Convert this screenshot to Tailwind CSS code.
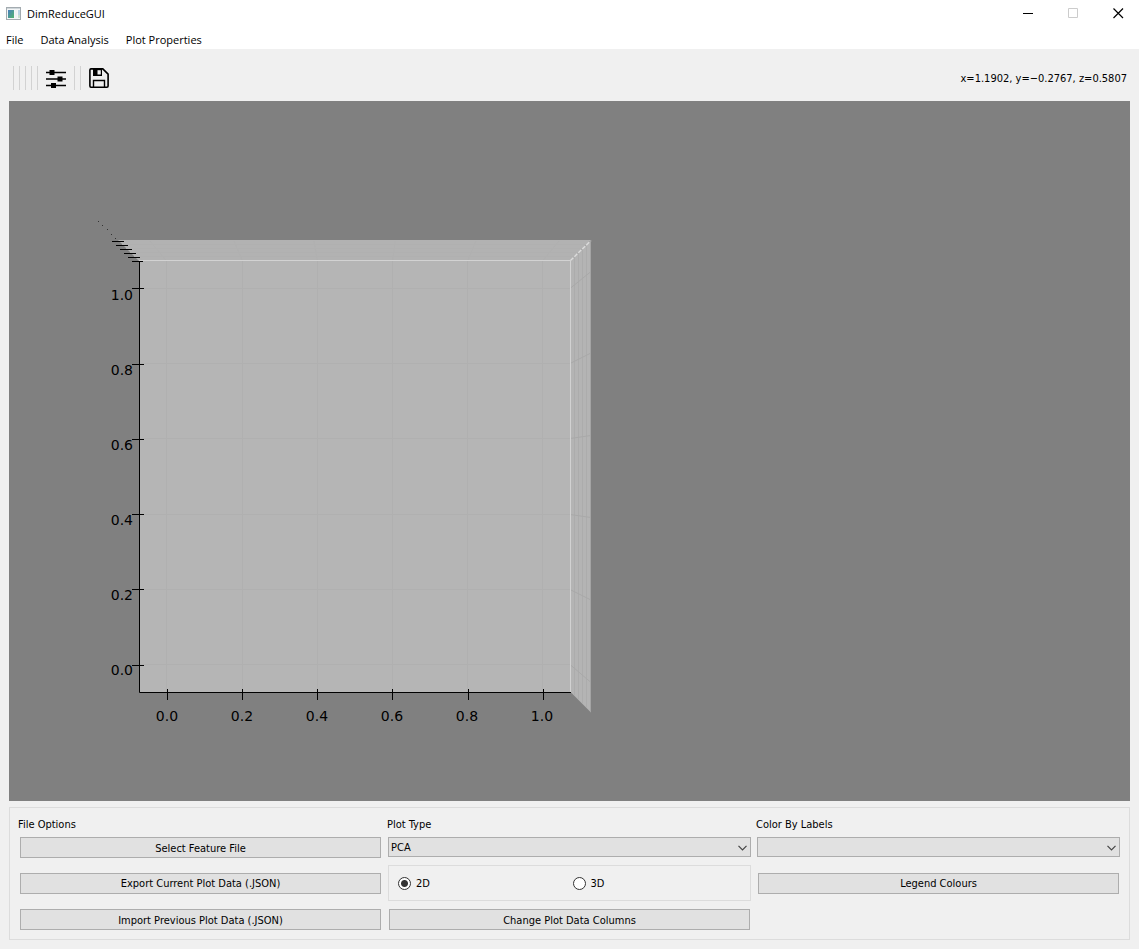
<!DOCTYPE html>
<html lang="en">
<head>
<meta charset="utf-8">
<title>DimReduceGUI</title>
<script src="https://cdn.jsdelivr.net/npm/@tailwindcss/browser@4"></script>
</head>
<body class="flex min-h-screen flex-col bg-[#f0f0f0] font-['DejaVu_Sans_Condensed','DejaVu_Sans',sans-serif] text-[11px] leading-4 text-black">
  <header class="bg-white">
    <div class="flex h-[27px] items-center gap-1 pl-1.5">
      <svg class="h-[13px] w-[15px]" viewBox="0 0 15 13" aria-hidden="true">
        <defs><linearGradient id="scr" x1="0" y1="0" x2="1" y2="1"><stop offset="0" stop-color="#4a7fc0"/><stop offset="1" stop-color="#4fb56c"/></linearGradient></defs>
        <rect x=".5" y=".5" width="14" height="12" fill="#f4f6f7" stroke="#a3abb0"/>
        <rect x="1" y="1" width="13" height="1" fill="#cfd6da"/>
        <rect x="2" y="3" width="6" height="8" fill="url(#scr)"/>
        <rect x="9" y="3" width="2" height="8" fill="#eef3f5"/>
        <rect x="12" y="3" width="2" height="5" fill="#b9d3e4"/>
        <rect x="12" y="8" width="2" height="3" fill="#c9e0cf"/>
      </svg>
      <h1 class="flex-1 pl-0.5 font-['Open_Sans',sans-serif]">DimReduceGUI</h1>
      <button aria-label="Minimize" class="flex h-full w-[41px] items-center justify-center"><svg class="size-[11px]" viewBox="0 0 11 11"><path d="M0 5.500h10" stroke="#000"/></svg></button>
      <button aria-label="Maximize" disabled class="flex h-full w-[41px] items-center justify-center"><svg class="size-[11px]" viewBox="0 0 11 11"><path d="M.5.5h9v9h-9z" fill="none" stroke="#ccc"/></svg></button>
      <button aria-label="Close" class="flex h-full w-[41px] items-center justify-center"><svg class="size-[11px]" viewBox="0 0 11 11"><path d="M.5.5l9.500 9.500M10 .5l-9.500 9.500" stroke="#000" stroke-width="1.2"/></svg></button>
    </div>
    <nav class="flex h-[22px] items-center gap-[17px] pt-1 pl-1.5 font-['Open_Sans',sans-serif]">
      <button>File</button>
      <button>Data Analysis</button>
      <button>Plot Properties</button>
    </nav>
  </header>

  <div class="flex h-[52px] items-center pt-1.5 pr-3 pl-[13px]">
    <div class="flex gap-[5px]">
      <i class="h-6 w-px bg-[#d2d2d2]"></i><i class="h-6 w-px bg-[#d2d2d2]"></i><i class="h-6 w-px bg-[#d2d2d2]"></i><i class="h-6 w-px bg-[#d2d2d2]"></i><i class="h-6 w-px bg-[#d2d2d2]"></i>
    </div>
    <button aria-label="Configure subplots" class="ml-2">
      <svg class="block size-5" viewBox="0 0 20 20"><path d="M0 4.500h20M0 11h20M0 17.500h20" stroke="#000" stroke-width="1.600"/><path d="M3.500 2h5v5h-5zM11.500 8.500h5v5h-5zM5 15h5v5H5z" fill="#000"/></svg>
    </button>
    <div class="ml-2 flex gap-[5px]">
      <i class="h-6 w-px bg-[#d2d2d2]"></i><i class="h-6 w-px bg-[#d2d2d2]"></i>
    </div>
    <button aria-label="Save the figure" class="ml-2">
      <svg class="block size-5" viewBox="0 0 20 20"><path d="M2 .9h11.800l5.300 5.200V18a1.200 1.200 0 0 1-1.200 1.200H2A1.200 1.200 0 0 1 .9 18V2A1.200 1.200 0 0 1 2 .9z" fill="none" stroke="#000" stroke-width="1.600"/><path d="M4.500 19v-6.500h11V19" fill="none" stroke="#000" stroke-width="1.400"/><path d="M4 1h9v7H4z" fill="#000"/><path d="M8.500 2.200h3.300v4.300H8.500z" fill="#f0f0f0"/></svg>
    </button>
    <output class="ml-auto pt-0.5">x=1.1902, y=−0.2767, z=0.5807</output>
  </div>

  <main class="mx-[9px] flex min-h-[700px] flex-1 bg-[#808080]">
    <svg class="w-full" viewBox="9 101 1121 700" preserveAspectRatio="xMinYMin meet" role="img" aria-label="Empty three dimensional plot">
      <!-- panes -->
      <path d="M118 240H591L570.500 261H139z" fill="#b2b2b2"/>
      <path d="M570.500 261L591 240V712.500L570.500 692z" fill="#b4b4b4"/>
      <path d="M139 261H571V692H139z" fill="#b5b5b5"/>
      <!-- grid -->
      <g fill="none" stroke="#b0b0b0">
        <path d="M166.500 692V261L150 241M242.500 692V261L234 241M317.500 692V261L314 241M392.500 692V261L395 241M467.500 692V261L476 241M542.500 692V261L559 241"/>
        <path d="M139 288.500H570M139 363.500H570M139 438.500H570M139 514.500H570M139 589.500H570M139 664.500H570"/>
        <path d="M574.500 257V696M578.500 253V700M582.500 249V704M586.500 245V708" stroke="#acacac"/>
        <path d="M570 288.500L591 271.500M570 363.500L591 353M570 438.500L591 435.500M570 514.500L591 517.500M570 589.500L591 600M570 664.500L591 682.500" stroke="#a9a9a9"/>
        <path d="M122 244.500H587M126 248.500H583M130 252.500H579M134 256.500H575"/>
      </g>
      <!-- pane edges -->
      <path d="M139 260.500H570.500V692" fill="none" stroke="#d2d2d2"/>
      <path d="M570.500 260.500L591 240.500" stroke="#dcdcdc" stroke-width="1.400" stroke-dasharray="4 1.500"/>
      <path d="M590.500 240V712" stroke="#a4a4a4"/>
      <!-- axes and ticks -->
      <g fill="none" stroke="#000">
        <path d="M139.500 261V692.500H571"/>
        <path d="M132 288.500h12M132 364.500h12M132 439.500h12M132 514.500h12M132 589.500h12M132 665.500h12"/>
        <path d="M167.500 689v11M242.500 689v11M317.500 689v11M392.500 689v11M468.500 689v11M543.500 689v11"/>
        <path d="M112 241.500h12M116 245.500h12M120 249.500h12M124 253.500h12M128 257.500h12M132 261.500h11"/>
      </g>
      <path d="M98 221h1v1h-1zM102 225h1v1h-1zM107 229h1v1h-1zM111 234h1v1h-1zM115 238h1v1h-1z" fill="#333"/>
      <g class="font-['DejaVu_Sans',sans-serif] text-[14px]">
        <g text-anchor="end">
          <text x="133" y="300">1.0</text><text x="133" y="375">0.8</text><text x="133" y="450">0.6</text><text x="133" y="525">0.4</text><text x="133" y="600">0.2</text><text x="133" y="675">0.0</text>
        </g>
        <g text-anchor="middle">
          <text x="167" y="721">0.0</text><text x="242" y="721">0.2</text><text x="317" y="721">0.4</text><text x="392" y="721">0.6</text><text x="467" y="721">0.8</text><text x="542" y="721">1.0</text>
        </g>
      </g>
    </svg>
  </main>

  <section class="mx-[9px] mt-1.5 mb-[9px] grid grid-flow-col grid-cols-3 grid-rows-[13px_20px_36px_21px] gap-x-1.5 gap-y-2 border border-[#dcdcdc] px-[9px] pt-2 pb-[9px]">
    <h2 class="-mx-px pt-px">File Options</h2>
    <button class="mx-px h-[21px] border border-[#adadad] bg-[#e1e1e1] pt-0.5">Select Feature File</button>
    <button class="mx-px h-[21px] self-center border border-[#adadad] bg-[#e1e1e1] pt-0.5">Export Current Plot Data (.JSON)</button>
    <button class="mx-px h-[21px] border border-[#adadad] bg-[#e1e1e1] pt-0.5">Import Previous Plot Data (.JSON)</button>

    <label for="plot-type" class="-mx-px pt-px">Plot Type</label>
    <div class="relative">
      <select id="plot-type" class="block h-5 w-full appearance-none border border-[#adadad] bg-[#e1e1e1] pt-0.5 pl-0.5 leading-4"><option>PCA</option></select>
      <svg class="pointer-events-none absolute top-2 right-1 h-[6px] w-[9px]" viewBox="0 0 9 6"><path d="M.5.8l4 4 4-4" fill="none" stroke="#444" stroke-width="1.200"/></svg>
    </div>
    <fieldset class="grid grid-cols-2 items-center gap-x-1.5 border border-[#dcdcdc] px-[9px]">
      <label class="flex items-center gap-[5px]"><input type="radio" name="dim" checked class="size-[13px] appearance-none rounded-full border border-[#333] bg-white bg-[radial-gradient(circle,#333_3px,transparent_4px)]"><span class="pt-0.5">2D</span></label>
      <label class="flex items-center gap-[5px]"><input type="radio" name="dim" class="size-[13px] appearance-none rounded-full border border-[#333] bg-white"><span class="pt-0.5">3D</span></label>
    </fieldset>
    <button class="mx-px h-[21px] border border-[#adadad] bg-[#e1e1e1] pt-0.5">Change Plot Data Columns</button>

    <label for="color-by" class="-mx-px pt-px">Color By Labels</label>
    <div class="relative">
      <select id="color-by" class="block h-5 w-full appearance-none border border-[#adadad] bg-[#e1e1e1] pt-0.5 pl-0.5 leading-4"><option></option></select>
      <svg class="pointer-events-none absolute top-2 right-1 h-[6px] w-[9px]" viewBox="0 0 9 6"><path d="M.5.8l4 4 4-4" fill="none" stroke="#444" stroke-width="1.200"/></svg>
    </div>
    <button class="mx-px h-[21px] self-center border border-[#adadad] bg-[#e1e1e1] pt-0.5">Legend Colours</button>
  </section>
</body>
</html>
